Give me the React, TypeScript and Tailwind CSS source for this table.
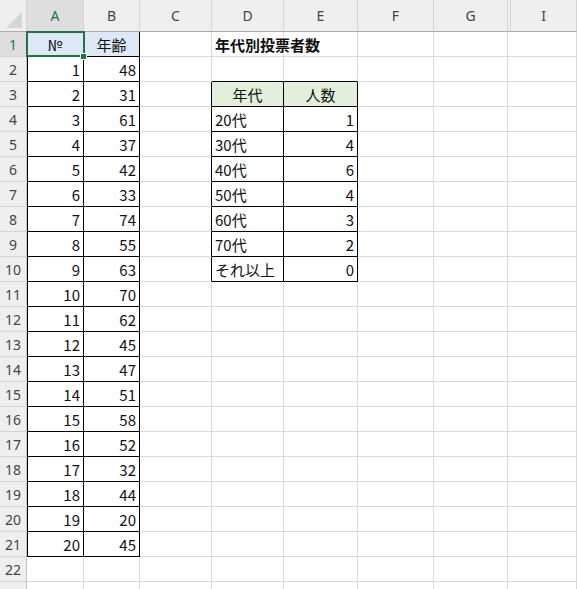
import React from "react";

const cols = ["A", "B", "C", "D", "E", "F", "G", "H", "I"];
const ages = [48, 31, 61, 37, 42, 33, 74, 55, 63, 70, 62, 45, 47, 51, 58, 52, 32, 44, 20, 45];
const groups: [string, number][] = [
  ["20代", 1],
  ["30代", 4],
  ["40代", 6],
  ["50代", 4],
  ["60代", 3],
  ["70代", 2],
  ["それ以上", 0],
];

// c: 0 = A ... 8 = I
const inData = (r: number, c: number) =>
  (r >= 1 && r <= 21 && (c === 0 || c === 1)) || (r >= 3 && r <= 10 && (c === 3 || c === 4));

const cellValue = (r: number, c: number): { text: string; align: string; cls?: string } | null => {
  if (r === 1 && c === 0) return { text: "№", align: "justify-center" };
  if (r === 1 && c === 1) return { text: "年齢", align: "justify-center" };
  if (r >= 2 && r <= 21 && c === 0) return { text: String(r - 1), align: "justify-end" };
  if (r >= 2 && r <= 21 && c === 1) return { text: String(ages[r - 2]), align: "justify-end" };
  if (r === 1 && c === 3) return { text: "年代別投票者数", align: "justify-start", cls: "font-bold overflow-visible whitespace-nowrap z-10" };
  if (r === 3 && c === 3) return { text: "年代", align: "justify-center" };
  if (r === 3 && c === 4) return { text: "人数", align: "justify-center" };
  if (r >= 4 && r <= 10 && c === 3) return { text: groups[r - 4][0], align: "justify-start" };
  if (r >= 4 && r <= 10 && c === 4) return { text: String(groups[r - 4][1]), align: "justify-end" };
  return null;
};

const fillFor = (r: number, c: number) => {
  if (r === 1 && (c === 0 || c === 1)) return "bg-[#dde9f6]";
  if (r === 3 && (c === 3 || c === 4)) return "bg-[#e2efda]";
  return "bg-white";
};

function Cell({ r, c }: { r: number; c: number }) {
  const right = inData(r, c) || inData(r, c + 1) ? "border-r-black" : "border-r-[#dadada]";
  const bottom = inData(r, c) || inData(r + 1, c) ? "border-b-black" : "border-b-[#dadada]";
  const leftEdge = c === 0 && r >= 2 && r <= 21 ? "shadow-[inset_1px_0_0_#000]" : "";
  const v = cellValue(r, c);
  const hidden = c === 7 ? "border-r-0" : "border-r";
  const lift = r === 1 && c === 0 ? "z-10" : "";
  return (
    <div
      className={`relative ${lift} h-[25px] border-b ${hidden} ${right} ${bottom} ${fillFor(r, c)} ${leftEdge} flex items-center px-[3px] text-[15px] text-[#111] ${v?.align ?? ""}`}
    >
      {v && <span className={`leading-none ${v.cls ?? ""}`}>{v.text}</span>}
      {r === 1 && c === 0 && (
        <>
          <div className="absolute -left-[1px] -top-[1px] -right-[2px] -bottom-[1px] border-2 border-[#217346] pointer-events-none" />
          <div className="absolute -right-[4px] -bottom-[4px] w-[7px] h-[7px] bg-[#217346] border border-white" />
        </>
      )}
    </div>
  );
}

export default function App() {
  const rows = Array.from({ length: 23 }, (_, i) => i + 1);
  return (
    <div
      className="w-[577px] h-[589px] overflow-hidden bg-white"
      style={{ fontFamily: '"Noto Sans CJK JP", "Noto Sans", sans-serif' }}
    >
      <div className="grid grid-cols-[27px_57px_56px_72px_72px_74px_76px_74px_3px_1fr]">
        {/* corner */}
        <div className="relative h-[32px] bg-[#efefef] border-b border-r border-b-[#ababab] border-r-[#d4d4d4]">
          <div className="absolute right-[4px] bottom-[3px] w-0 h-0 border-l-[16px] border-l-transparent border-b-[16px] border-b-[#d6d6d6]" />
        </div>
        {cols.map((l, i) => (
          <div
            key={l}
            className={`h-[32px] flex items-center justify-center border-b border-r border-b-[#ababab] border-r-[#d4d4d4] text-[14px] ${
              i === 0 ? "bg-[#dedede] text-[#217346]" : "bg-[#efefef] text-[#444]"
            }`}
            style={{ fontFamily: '"Noto Sans", sans-serif' }}
          >
            {l === "H" ? "" : l}
          </div>
        ))}
        {rows.map((r) => (
          <React.Fragment key={r}>
            <div
              className={`h-[25px] flex items-center justify-center border-b border-r border-b-[#d4d4d4] border-r-[#c4c4c4] text-[14px] ${
                r === 1 ? "bg-[#dedede] text-[#217346]" : "bg-[#efefef] text-[#444]"
              }`}
              style={{ fontFamily: '"Noto Sans", sans-serif' }}
            >
              {r < 23 ? r : ""}
            </div>
            {cols.map((_, c) => (
              <Cell key={c} r={r} c={c} />
            ))}
          </React.Fragment>
        ))}
      </div>
    </div>
  );
}
